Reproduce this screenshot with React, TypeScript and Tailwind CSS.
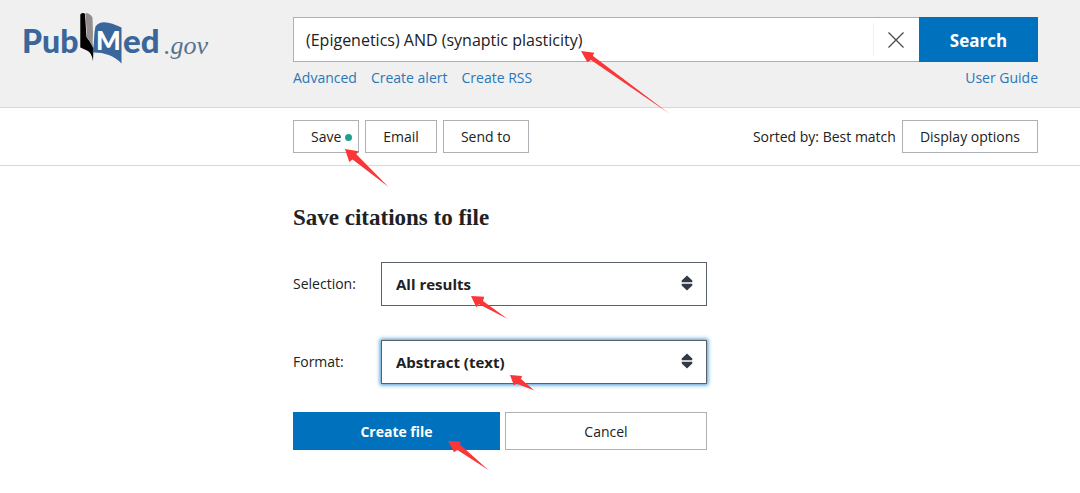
import { useState } from 'react';
import type { ReactNode } from 'react';

const actionButton =
  'h-[33px] border border-[#aeb0b5] bg-white px-[17px] pt-px text-sm text-[#212121] hover:bg-gray-50';

function Logo() {
  return (
    <svg width="190" height="60" viewBox="0 0 190 60" role="img" aria-label="PubMed.gov">
      <text x="0" y="44" fill="#39669b" className="font-['Lato'] text-[32px] font-black">Pub</text>
      {/* Book spine, page and cover */}
      <path d="M58.300 5.500 Q61 3 63 5 L64.500 28 Q68 32 71.500 39 L71 52 Q70 44 65 41.500 L58.300 38.500Z" fill="#000" />
      <path d="M63.500 4 Q68 4 70.500 8.500 L71 26 Q70 32 71.500 40 Q68 32 65 29Z" fill="#938e8e" />
      <path d="M70.500 43.500 C72.500 36 71.500 26 73.500 17.500 C79 10 89 14 99.500 18.500 V54.500 C92 46 80 43 70.500 43.500Z" fill="#39669b" />
      <text x="74" y="41" fill="#fff" className="font-['Lato'] text-[26px] font-black">M</text>
      <text x="101" y="44" fill="#39669b" className="font-['Lato'] text-[33px] font-black">ed</text>
      <text x="142" y="45" fill="#56728f" className="font-['Liberation_Serif'] text-[26px] italic">.gov</text>
    </svg>
  );
}

// Red pointer, the tip is the top left corner of the drawing
function Arrow({ points, className }: { points: string; className: string }) {
  return (
    <svg
      width="90"
      height="64"
      viewBox="0 0 90 64"
      aria-hidden="true"
      className={`pointer-events-none absolute z-10 ${className}`}
    >
      <polygon points={points} fill="#fa3638" />
    </svg>
  );
}

function SelectField({ id, label, options, focused, children }: {
  id: string;
  label: string;
  options: string[];
  focused?: boolean;
  children?: ReactNode;
}) {
  const [value, setValue] = useState(options[0]);

  return (
    <div className="flex items-center">
      <label htmlFor={id} className="w-[88px] flex-shrink-0 text-sm">{label}</label>
      <div className="relative flex-1">
        <select
          id={id}
          value={value}
          onChange={e => setValue(e.target.value)}
          className={`block h-[44px] w-full appearance-none border border-[#5b616b] bg-white px-[14px] text-[15px] font-bold text-[#212121] outline-none ${focused ? 'shadow-[0_0_4px_1px_#3e94cf]' : ''}`}
        >
          {options.map(o => <option key={o}>{o}</option>)}
        </select>
        <svg width="12" height="16" viewBox="0 0 12 16" aria-hidden="true" className="pointer-events-none absolute top-[13px] right-[14px]">
          <path d="M6 0.500 L11.300 5.500 V7.200 H0.700 V5.500Z M0.700 8.800 H11.300 V10.500 L6 15.500 L0.700 10.500Z" fill="#323a45" />
        </svg>
        {children}
      </div>
    </div>
  );
}

export default function App() {
  const [query, setQuery] = useState('(Epigenetics) AND (synaptic plasticity)');

  return (
    <div className="min-h-screen bg-white font-['Open_Sans',sans-serif] text-[#212121]">
      {/* Search header */}
      <header className="flex border-b border-[#d6d7d9] bg-[#f0f0f0] pt-[17px] pr-[42px] pb-[19px]">
        <a href="#home" className="-mt-2 h-[60px] w-[293px] flex-shrink-0 pl-[22px]">
          <Logo />
        </a>
        <div className="relative flex-1">
          <form className="flex h-[45px]" onSubmit={e => e.preventDefault()}>
            <div className="flex flex-1 items-center border border-r-0 border-[#aeb0b5] bg-white">
              <input
                type="text"
                aria-label="Search term"
                value={query}
                onChange={e => setQuery(e.target.value)}
                className="h-full min-w-0 flex-1 bg-transparent px-3 pt-px text-base outline-none"
              />
              <button
                type="button"
                aria-label="Clear search"
                onClick={() => setQuery('')}
                className="flex h-[33px] w-[46px] items-center justify-center border-l border-[#f0f0f0] pr-[2px]"
              >
                <svg width="16" height="16" viewBox="0 0 16 16" aria-hidden="true">
                  <path d="M0.500 0.500 L15.500 15.500 M15.500 0.500 L0.500 15.500" stroke="#4a4a4a" strokeWidth="1.300" />
                </svg>
              </button>
            </div>
            <button type="submit" className="w-[119px] bg-[#0071bc] pt-[2px] text-[17px] font-bold text-white">Search</button>
          </form>
          <nav className="mt-[6px] flex gap-[14px] text-sm leading-5 text-[#2a77b8]">
            <a href="#advanced">Advanced</a>
            <a href="#alert">Create alert</a>
            <a href="#rss">Create RSS</a>
            <a href="#guide" className="ml-auto">User Guide</a>
          </nav>
          <Arrow className="top-[34px] left-[288px]" points="0,0 13.300,1.700 11.700,4.700 88.500,62.700 10,9 6.300,11.300" />
        </div>
      </header>

      {/* Actions */}
      <div className="flex items-center gap-[6px] border-b border-[#d6d7d9] py-3 pr-[42px] pl-[293px]">
        <div className="relative">
          <button className={`${actionButton} flex items-center gap-1 pr-[6px]`}>
            Save
            <span className="h-[7px] w-[7px] rounded-full bg-[#1fa088]" />
          </button>
          <Arrow className="top-[29px] left-[52px]" points="0,0 13.600,2.300 11.300,5.300 43.600,38 7.600,10.600 4.300,13" />
        </div>
        <button className={actionButton}>Email</button>
        <button className={actionButton}>Send to</button>
        <span className="ml-auto text-sm">Sorted by: Best match</span>
        <button className={actionButton}>Display options</button>
      </div>

      {/* Save panel */}
      <main className="pt-[37px] pr-[42px] pb-10 pl-[293px]">
        <form className="max-w-[414px]" onSubmit={e => e.preventDefault()}>
          <h1 className="font-['Liberation_Serif',serif] text-[23px] leading-[30px] font-bold">Save citations to file</h1>
          <div className="mt-[29px] flex flex-col gap-[34px]">
            <SelectField id="selection" label="Selection:" options={['All results', 'All results on this page', 'Selection']}>
              <Arrow className="top-[34px] left-[90px]" points="0,0 13.300,0.700 12,5 36.700,23 8,8.300 5.300,11.300" />
            </SelectField>
            <SelectField id="format" label="Format:" options={['Abstract (text)', 'Summary (text)', 'PubMed', 'PMID', 'CSV']} focused>
              <Arrow className="top-[35px] left-[129px]" points="0,0 12,1 11,4 24.300,15.400 6.300,8.400 4,10.400" />
            </SelectField>
          </div>
          <div className="relative mt-[28px] flex gap-[5px] text-sm">
            <button type="submit" className="h-[38px] w-1/2 bg-[#0071bc] pt-px font-bold text-white">Create file</button>
            <button type="button" className="h-[38px] flex-1 border border-[#aeb0b5] pt-px">Cancel</button>
            <Arrow className="top-[29px] left-[155px]" points="0,0 12.700,0.600 12,3.600 40.400,29 9.400,9 6,11.300" />
          </div>
        </form>
      </main>
    </div>
  );
}
